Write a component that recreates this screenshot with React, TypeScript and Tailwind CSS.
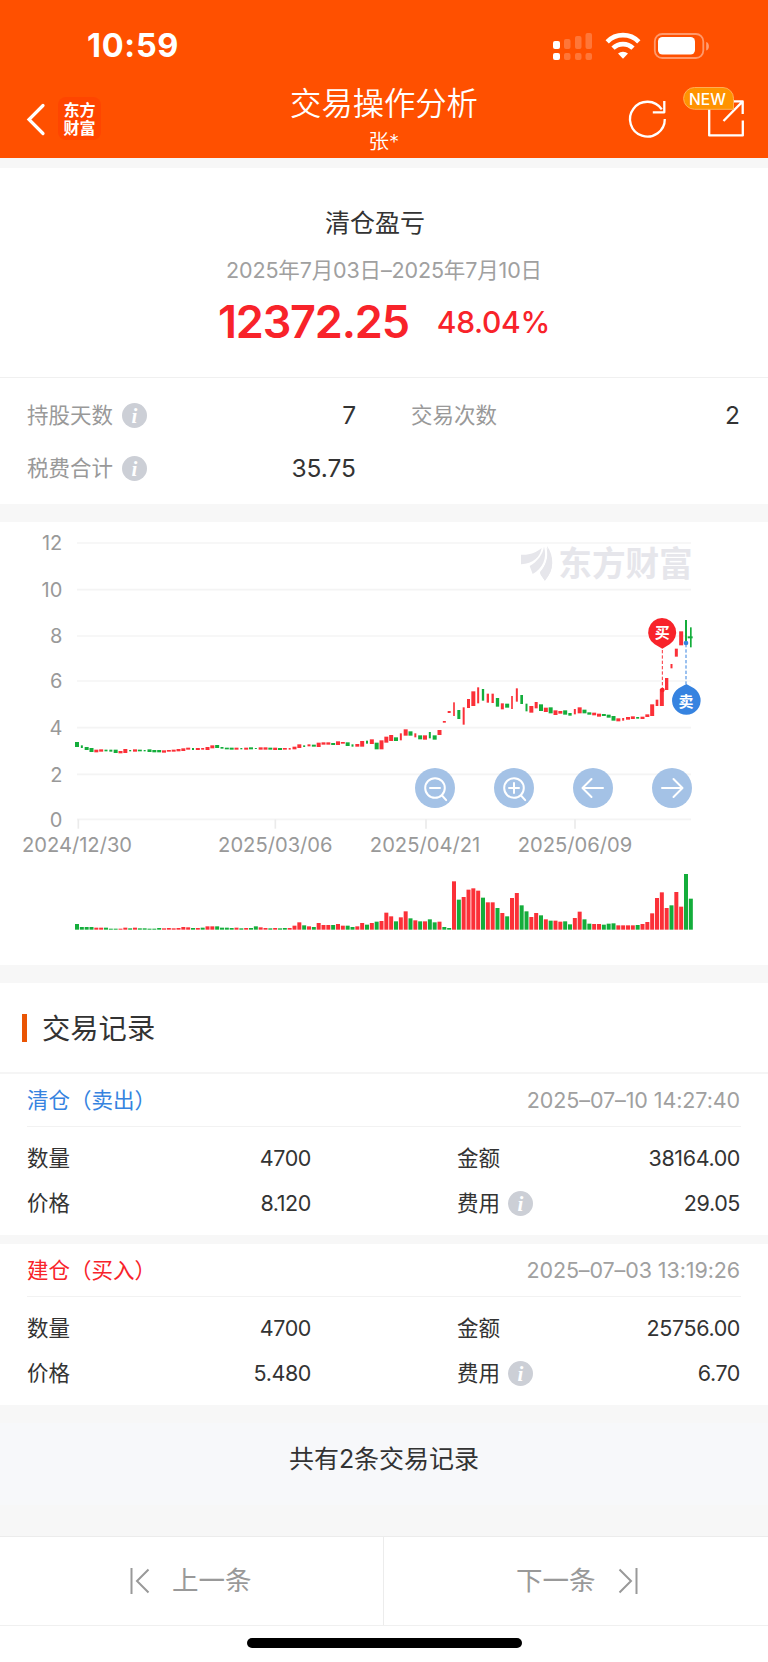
import React from 'react';

type Candle = [color: 'r' | 'g', top: number, bottom: number, volume: number, width?: number];

// Chart units are thirds of a pixel
const FIRST_X = 231;
const STEP = 14.5;
const VOLUME_BASE = 1229;
const RED = '#fb3038';
const GREEN = '#14ad3b';

const candles: Candle[] = [
  ['g', 666, 681, 17], ['g', 676, 684, 8, 6], ['g', 681, 690, 8], ['g', 684, 696, 8],
  ['r', 689, 697, 6], ['r', 688, 695, 6], ['g', 689, 694, 6, 9], ['g', 689, 695, 3, 9],
  ['g', 689, 699, 3], ['r', 693, 700, 3], ['r', 687, 699, 6], ['g', 690, 694, 4, 6],
  ['r', 688, 695, 6], ['g', 689, 694, 4], ['g', 690, 694, 4, 6], ['g', 688, 696, 3],
  ['g', 690, 697, 3], ['g', 690, 697, 5], ['r', 691, 698, 4], ['r', 690, 695, 5],
  ['r', 689, 695, 4], ['r', 687, 694, 5], ['r', 685, 693, 8], ['r', 683, 689, 7],
  ['g', 684, 690, 5, 6], ['r', 684, 690, 5], ['r', 684, 689, 6, 9], ['r', 681, 690, 10],
  ['r', 676, 685, 10], ['g', 675, 684, 10], ['g', 681, 686, 6, 9], ['g', 683, 688, 6],
  ['g', 683, 689, 5], ['r', 683, 689, 6], ['g', 684, 688, 4, 6], ['r', 683, 689, 5],
  ['g', 682, 688, 5], ['g', 684, 687, 10, 6], ['r', 682, 689, 7], ['r', 682, 689, 5],
  ['g', 683, 689, 4], ['r', 683, 690, 5], ['g', 684, 690, 4], ['r', 684, 689, 5],
  ['r', 684, 689, 5, 6], ['r', 680, 688, 12], ['r', 673, 684, 22], ['g', 676, 681, 13, 6],
  ['r', 673, 679, 10, 9], ['g', 674, 680, 8], ['r', 668, 681, 20], ['r', 667, 674, 14],
  ['r', 667, 674, 14], ['g', 669, 675, 14], ['r', 664, 675, 17], ['r', 666, 671, 12],
  ['g', 667, 678, 12], ['g', 673, 680, 8, 6], ['r', 672, 680, 10], ['r', 663, 680, 20],
  ['g', 662, 671, 15, 6], ['r', 658, 672, 20], ['g', 668, 688, 24], ['r', 661, 688, 26],
  ['r', 650, 668, 51], ['r', 645, 663, 40], ['g', 652, 663, 25], ['r', 640, 661, 37, 6],
  ['r', 628, 647, 55], ['g', 634, 647, 34], ['r', 640, 652, 28, 6], ['g', 646, 658, 25],
  ['r', 646, 659, 25], ['g', 636, 655, 31, 6], ['g', 646, 659, 22], ['r', 630, 645, 24],
  ['r', 603, 608, 8, 9], ['r', 573, 579, 5, 9], ['r', 547, 588, 145, 5], ['g', 570, 597, 90, 9],
  ['r', 562, 614, 98, 6], ['r', 537, 564, 120, 9], ['r', 514, 558, 124], ['r', 502, 550, 117, 6],
  ['g', 507, 542, 96, 7], ['r', 521, 548, 82, 7], ['r', 521, 549, 82, 7], ['g', 534, 560, 65, 10],
  ['r', 550, 568, 50, 9], ['g', 551, 563, 40], ['r', 528, 567, 95, 5], ['r', 505, 545, 110, 6],
  ['g', 525, 552, 73, 8], ['g', 551, 574, 55, 6], ['r', 558, 578, 38], ['r', 546, 565, 50, 9],
  ['g', 553, 573, 43], ['r', 563, 576, 31], ['g', 562, 580, 27], ['r', 571, 585, 27],
  ['r', 573, 581, 24], ['g', 571, 584, 25], ['g', 579, 587, 16, 10], ['r', 567, 583, 35, 6],
  ['r', 562, 580, 54], ['g', 569, 580, 31], ['g', 577, 584, 18], ['r', 578, 586, 17],
  ['r', 581, 590, 17], ['g', 582, 588, 15], ['g', 584, 593, 18], ['g', 588, 602, 19],
  ['r', 595, 604, 13], ['r', 594, 602, 13, 6], ['r', 591, 599, 13], ['r', 589, 597, 13],
  ['g', 591, 596, 14, 9], ['r', 590, 597, 17], ['r', 583, 591, 23], ['r', 553, 588, 49],
  ['r', 539, 558, 95, 8], ['r', 507, 558, 112], ['r', 474, 510, 65, 10], ['r', 432, 445, 73, 6],
  ['r', 386, 410, 113, 9], ['r', 334, 376, 69], ['g', 300, 368, 167, 6], ['g', 322, 382, 93, 5],
];

// Volume bars that are coloured differently from their candle
const volumeColor = (i: number, color: 'r' | 'g') => {
  if ([76, 77, 123, 43, 26].includes(i)) return GREEN;
  return color === 'r' ? RED : GREEN;
};

const yAxis = [
  { label: '12', y: 69 },
  { label: '10', y: 209 },
  { label: '8', y: 348 },
  { label: '6', y: 483 },
  { label: '4', y: 623 },
  { label: '2', y: 763 },
  { label: '0', y: 898 },
];

const xAxis = [
  { label: '2024/12/30', x: 231, tick: 235 },
  { label: '2025/03/06', x: 826, tick: 826 },
  { label: '2025/04/21', x: 1275, tick: 1278 },
  { label: '2025/06/09', x: 1725, tick: 1725 },
];

const InfoIcon = () => (
  <svg className="h-[25px] w-[25px] shrink-0" viewBox="0 0 25 25">
    <circle cx="12.5" cy="12.5" r="12.5" fill="#cccfd6" />
    <text x="12.5" y="19.5" textAnchor="middle" fontSize="21" fontStyle="italic" fontWeight="700" fontFamily="Liberation Serif, serif" fill="#fff">
      i
    </text>
  </svg>
);

const StatusBar = () => (
  <div className="flex h-[85px] items-center pt-[8px] pl-[87px]">
    <span className="w-[92px] text-[32.5px] leading-none font-bold tracking-[0.7px]">10:59</span>
    <svg className="ml-[374px] h-[30px] w-[160px]" viewBox="0 0 160 30" fill="#fff">
      <rect x="0" y="9" width="7" height="8" rx="2" />
      <rect x="0" y="21" width="7" height="7" rx="2" />
      <g opacity="0.22">
        <rect x="11" y="7" width="6.5" height="10" rx="2" />
        <rect x="22" y="4" width="6.5" height="13" rx="2" />
        <rect x="32.5" y="1" width="6.5" height="16" rx="2" />
        <rect x="11" y="21" width="6.5" height="7" rx="2" />
        <rect x="22" y="21" width="6.5" height="7" rx="2" />
        <rect x="32.5" y="21" width="6.5" height="7" rx="2" />
      </g>
      <g fill="none" stroke="#fff" strokeWidth="4.6">
        <path d="M54.2 9.8a22 22 0 0 1 31.6 0" />
        <path d="M60 16.2a14.2 14.2 0 0 1 20 0" />
      </g>
      <path d="M65 21.6a7.6 7.6 0 0 1 10 0l-5 5.2z" />
      <rect x="101.8" y="2" width="48.5" height="24" rx="7.5" fill="none" stroke="#fff" strokeOpacity="0.42" strokeWidth="1.8" />
      <rect x="105" y="5" width="37" height="17.5" rx="4.5" />
      <path d="M153.2 10v8.6c3.6-1 3.6-7.6 0-8.6z" opacity="0.45" />
    </svg>
  </div>
);

const NavBar = () => (
  <div className="flex h-[73px] items-start justify-between">
    <div className="flex w-[240px] items-center pt-3 pl-[26px]">
      <svg className="h-[34px] w-[20px]" viewBox="0 0 20 34" fill="none" stroke="#fff" strokeWidth="3.2" strokeLinecap="round">
        <path d="M17 3.5L3 17.5l14 14" />
      </svg>
      <div className="ml-3 flex h-[43px] w-[43px] flex-col items-center justify-center rounded-lg bg-[#ff4500] text-[16px] leading-[18px] font-bold">
        <span>东方</span>
        <span>财富</span>
      </div>
    </div>
    <div className="flex flex-col items-center pt-px">
      <h1 className="text-[31.3px] leading-[37px] font-[350]">交易操作分析</h1>
      <p className="mt-2 text-[20.5px] leading-[22px] font-[350]">张*</p>
    </div>
    <div className="w-[240px]">
      <svg className="h-[60px] w-[240px]" viewBox="528 85 240 60" fill="none" stroke="#fff" strokeWidth="2.3" strokeLinejoin="round">
        <path d="M661.8 109.4A17.4 17.4 0 1 0 664.8 119" />
        <path d="M664.3 101v11.3h-11.5" />
        <path d="M727 101.4h15.7V114M742.7 101.4L723.5 121" />
        <path d="M709.2 106v29.4h33.6v-14.8" />
        <path d="M694.5 87.5h28.5a10.8 10.8 0 0 1 10.5 10.8v11H694.5a10.9 10.9 0 0 1 0-21.8z" fill="#ff9300" stroke="#ffae55" strokeWidth="1" />
        <text x="707.5" y="104.5" textAnchor="middle" fontSize="15.6" fontFamily="Inter, sans-serif" fontWeight="500" fill="#fff" stroke="none">
          NEW
        </text>
      </svg>
    </div>
  </div>
);

const Summary = () => (
  <section className="h-[336px] bg-white">
    <div className="flex h-[210px] flex-col items-center border-b border-[#f0f0f0] pt-[38px]">
      <h2 className="pr-[18px] text-[25px] leading-[34px] text-[#333]">清仓盈亏</h2>
      <p className="mt-[14px] text-[21.5px] leading-[32px] tracking-[-0.15px] text-[#a0a0a0]">2025年7月03日–2025年7月10日</p>
      <div className="mt-[11px] flex h-[50px] items-center gap-7 text-[#f8232a]">
        <span className="text-[45px] font-semibold tracking-[-1.2px]">12372.25</span>
        <span className="text-[30px] font-medium tracking-[-0.3px]">48.04%</span>
      </div>
    </div>
    <div className="grid grid-cols-[329px_1fr] gap-x-[55px] pt-[11px] pr-7 pl-[27px] text-[21.5px] text-[#999]">
      <div className="flex h-[53px] items-center">
        <span>持股天数</span>
        <span className="ml-[9px]"><InfoIcon /></span>
        <span className="ml-auto text-[24.5px] text-[#333]">7</span>
      </div>
      <div className="flex h-[53px] items-center justify-between">
        <span>交易次数</span>
        <span className="text-[24.5px] text-[#333]">2</span>
      </div>
      <div className="flex h-[53px] items-center">
        <span>税费合计</span>
        <span className="ml-[9px]"><InfoIcon /></span>
        <span className="ml-auto text-[24.5px] text-[#333]">35.75</span>
      </div>
    </div>
  </section>
);

const chartActions = [
  { name: 'zoom-out', d: 'M15 20h10M26.8 27.3l4.4 4.8' },
  { name: 'zoom-in', d: 'M15 20h10M20 15v10M26.8 27.3l4.4 4.8' },
  { name: 'left', d: 'M30 20H10M18.5 11L9.5 20l9 9' },
  { name: 'right', d: 'M10 20h20M21.5 11l9 9-9 9' },
];

const ChartPanel = () => (
  <section className="relative h-[443px] bg-white">
    <svg className="block h-[443px] w-[768px]" viewBox="0 6 2304 1329" fontFamily="Inter, sans-serif">
      {yAxis.map((tick) => (
        <g key={tick.label}>
          <path d={`M231 ${tick.y}H2073`} stroke="#f4f4f4" strokeWidth="5" />
          <text x="187" y={tick.y + 22} textAnchor="end" fontSize="60" fill="#999">
            {tick.label}
          </text>
        </g>
      ))}
      {xAxis.map((tick) => (
        <g key={tick.label}>
          <path d={`M${tick.tick} 898v28`} stroke="#ebebeb" strokeWidth="5" />
          <text x={tick.x} y="995" textAnchor="middle" fontSize="60.5" fill="#999">
            {tick.label}
          </text>
        </g>
      ))}

      {/* Watermark */}
      <g fill="#e6e6eb">
        <path d="M1563 104c24 2 46-6 62-20-4 28-26 46-62 49z" />
        <path d="M1589 138c24-14 40-36 43-58 10 36-4 64-34 82z" />
        <path d="M1641 78c22 32 22 70-6 104-7-8-12-16-14-25 18-22 26-48 20-79z" />
        <path d="M1640 84c22 30 24 66-6 98-6-12-14-16-14-26 18-20 26-44 20-72z" />
        <text x="1675" y="167" fontSize="101" fontWeight="700" textLength="403" fontFamily="Noto Sans CJK SC, sans-serif">
          东方财富
        </text>
      </g>

      {candles.map(([color, top, bottom, volume, width = 12], i) => {
        const x = FIRST_X + i * STEP;
        return (
          <g key={i}>
            <rect x={x - width / 2} y={top} width={width} height={bottom - top} fill={color === 'r' ? RED : GREEN} />
            <rect x={x - 6} y={VOLUME_BASE - volume} width="12" height={volume} fill={volumeColor(i, color)} />
          </g>
        );
      })}
      <path d="M2063 352h15" stroke={GREEN} strokeWidth="6" />

      {/* Trade markers */}
      <path d="M1987 390v117" stroke="#fb3038" strokeWidth="3" strokeDasharray="10 6" />
      <path d="M2058 372v120" stroke="#3683e0" strokeWidth="3" strokeDasharray="10 6" />
      <circle cx="1987" cy="510" r="7" fill="#f8232a" />
      <circle cx="2058" cy="369" r="7" fill="#3683e0" />
      <path d="M1986 294a43 43 0 0 1 23 79l-22 13-23-13a43 43 0 0 1 22-79z" fill="#f8232a" />
      <path d="M2059 492l23 13a43 43 0 1 1-46 0z" fill="#3683e0" />
      <g fontFamily="Noto Sans CJK SC, sans-serif" fontSize="45" fontWeight="700" textAnchor="middle" fill="#fff">
        <text x="1987" y="354">买</text>
        <text x="2058" y="560">卖</text>
      </g>
    </svg>
    <div className="absolute top-[246px] left-[415px] flex gap-[39px]">
      {chartActions.map((action) => (
        <button key={action.name} className="h-10 w-10 rounded-full bg-[#a4c2e6]">
          <svg viewBox="0 0 40 40" fill="none" stroke="#fff" strokeWidth="2" strokeLinecap="round" strokeLinejoin="round">
            {action.name.startsWith('zoom') && <circle cx="20" cy="20" r="9.8" />}
            <path d={action.d} />
          </svg>
        </button>
      ))}
    </div>
  </section>
);

interface TradeRecordProps {
  title: string;
  titleClass: string;
  time: string;
  price: string;
  amount: string;
  fee: string;
}

const TradeRecord = ({ title, titleClass, time, price, amount, fee }: TradeRecordProps) => (
  <div className="h-[161px] bg-white px-[27px] text-[21.5px] text-[#333]">
    <div className="flex h-[53px] items-center justify-between border-b border-[#f2f2f2] pr-px">
      <span className={titleClass}>{title}</span>
      <span className="tracking-[-0.1px] text-[#a0a0a0]">{time}</span>
    </div>
    <div className="grid grid-cols-[284px_283px] justify-between pt-[9px] pr-px">
      <div className="flex h-[45px] items-center justify-between">
        <span>数量</span>
        <span className="tracking-[-0.4px]">4700</span>
      </div>
      <div className="flex h-[45px] items-center justify-between">
        <span>金额</span>
        <span className="tracking-[-0.4px]">{amount}</span>
      </div>
      <div className="flex h-[45px] items-center justify-between">
        <span>价格</span>
        <span className="tracking-[-0.4px]">{price}</span>
      </div>
      <div className="flex h-[45px] items-center">
        <span>费用</span>
        <span className="ml-2"><InfoIcon /></span>
        <span className="ml-auto tracking-[-0.4px]">{fee}</span>
      </div>
    </div>
  </div>
);

const App = () => {
  return (
    <div className="h-[1662px] w-[768px] overflow-hidden bg-[#f7f7f7] font-['Inter','Noto_Sans_CJK_SC',sans-serif] font-[370]">
      <header className="h-[158px] bg-[#ff5000] text-white">
        <StatusBar />
        <NavBar />
      </header>

      <div className="pt-[10px]">
        <Summary />
      </div>

      <div className="pt-[18px]">
        <ChartPanel />
      </div>

      {/* Trade records */}
      <section className="pt-[18px]">
        <div className="flex h-[91px] items-center border-b-2 border-[#f5f5f5] bg-white pl-[22px]">
          <span className="h-7 w-[5px] bg-[#ea5504]" />
          <h2 className="ml-[15px] pt-[3px] text-[28.3px] text-[#333]">交易记录</h2>
        </div>
        <TradeRecord
          title="清仓（卖出）"
          titleClass="text-[#3683e0]"
          time="2025–07–10 14:27:40"
          price="8.120"
          amount="38164.00"
          fee="29.05"
        />
        <div className="h-[9px]" />
        <TradeRecord
          title="建仓（买入）"
          titleClass="text-[#f8232a]"
          time="2025–07–03 13:19:26"
          price="5.480"
          amount="25756.00"
          fee="6.70"
        />
      </section>

      <div className="h-[131px] py-[18px]">
        <p className="flex h-[82px] items-center justify-center bg-[#f7f8fa] pb-2 text-[25px] text-[#333]">共有2条交易记录</p>
      </div>

      <footer className="h-[126px] border-t border-[#ececec] bg-white">
        <div className="grid h-[89px] grid-cols-2 border-b border-[#f0f0f0] text-[26.5px] text-[#999]">
          <div className="flex items-center border-r border-[#ececec] pl-[130px]">
            <svg className="h-[26px] w-5" viewBox="0 0 20 26" fill="none" stroke="#999" strokeWidth="2">
              <path d="M1.5 0v26M18.5 1.5L7 13l11.5 11.5" />
            </svg>
            <span className="ml-[22px]">上一条</span>
          </div>
          <div className="flex items-center pl-[132px]">
            <span>下一条</span>
            <svg className="ml-[22px] h-[26px] w-5" viewBox="0 0 20 26" fill="none" stroke="#999" strokeWidth="2">
              <path d="M18.5 0v26M1.5 1.5L13 13 1.5 24.5" />
            </svg>
          </div>
        </div>
        <div className="mx-auto mt-3 h-[10px] w-[275px] rounded-full bg-black" />
      </footer>
    </div>
  );
};

export default App;
